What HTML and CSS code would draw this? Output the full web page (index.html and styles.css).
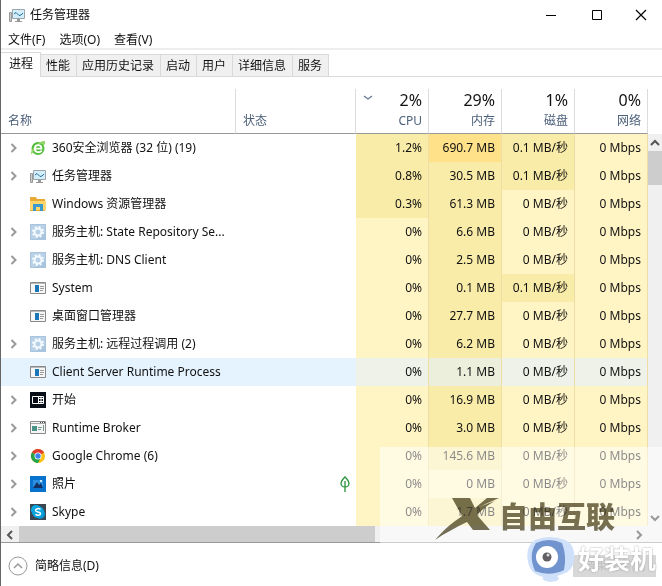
FILE: index.html
```html
<!DOCTYPE html>
<html lang="zh-CN">
<head>
  <meta charset="UTF-8">
  <title>任务管理器</title>
  <link rel="stylesheet" href="styles.css">
</head>
<body>

<svg class="symbols" aria-hidden="true">
  <symbol id="chevron" viewBox="0 0 8 10"><path d="M1.5 1 L5.5 5 L1.5 9" fill="none" stroke="currentColor" stroke-width="2"/></symbol>
  <symbol id="monitor" viewBox="0 0 16 16">
    <path d="M.5 5.5h2v9h-2z" fill="#ccc" stroke="#999"/>
    <path d="M3.500 2.500h12v9h-12z" fill="#d3edfa" stroke="#9aa5aa"/>
    <path d="M5 7l2-1.500 3 3 2-.5 2-2" fill="none" stroke="#21709b"/>
    <path d="M8 12h3v2h2v1H6v-1h2z" fill="#999"/>
  </symbol>
  <symbol id="browser" viewBox="0 0 16 16">
    <circle cx="8" cy="8.500" r="6.500" fill="#50bd38"/>
    <path d="M1.500 14.500C-1 11 8 1 14.500 1c1.500 1.500 0 4-1 5 0-3-2-3-4-2C6 6 5 10 1.500 14.500z" fill="#8ed564"/>
    <path d="M4.800 8.700h6.700c0-4.700-6.700-4.700-6.700 0 0 4 4.700 4.500 7 2" fill="none" stroke="#fff" stroke-width="1.800"/>
  </symbol>
  <symbol id="folder" viewBox="0 0 16 16">
    <path d="M0 1h6l1 2h8v12H0z" fill="#e8aa35"/>
    <path d="M0 5h16v9H0z" fill="#ffd66e"/>
    <path d="M3 8h10v7h-3v-4H6v4H3z" fill="#3a99ce"/>
  </symbol>
  <symbol id="service" viewBox="0 0 16 16">
    <path d="M0 0h16v16H0z" fill="#a9c4df"/>
    <path d="M1 1h14v7L5 15H1z" fill="#b9d1e7"/>
    <circle cx="8" cy="8" r="5" fill="none" stroke="#f4fbff" stroke-width="2" stroke-dasharray="2 1.930"/>
    <circle cx="8" cy="8" r="3.500" fill="none" stroke="#f4fbff" stroke-width="2"/>
  </symbol>
  <symbol id="app" viewBox="0 0 16 16">
    <path d="M.5 2.500h15v11H.5z" fill="#f7f7f7" stroke="#888"/>
    <path d="M1 3h14v1H1z" fill="#bbb"/>
    <path d="M5 5h4v7H5z" fill="#1977b8"/>
    <path d="M10 6.500h4M10 8.500h4M10 10.500h3" stroke="#999"/>
  </symbol>
  <symbol id="start" viewBox="0 0 16 16">
    <path d="M0 0h16v16H0z" fill="#080d18"/>
    <path d="M2.500 4.500h11v7h-11z" fill="none" stroke="#fff"/>
    <path d="M8.500 4v8M11 4v8M9 6.500h4M9 9.500h4" stroke="#fff"/>
  </symbol>
  <symbol id="broker" viewBox="0 0 16 16">
    <path d="M.5 1.500h15v12H.5z" fill="#f5f5f5" stroke="#888"/>
    <path d="M1 3.500h14" stroke="#aaa"/>
    <path d="M10 2.500h1M12 2.500h1M14 2.500h1" stroke="#444"/>
    <path d="M2 6h5v5H2z" fill="#4a9285"/>
    <path d="M8 7.500h4M8 9.500h3M13.500 5v6" stroke="#78988e"/>
  </symbol>
  <symbol id="chrome" viewBox="0 0 16 16">
    <circle cx="8" cy="8" r="7" fill="#fbc116"/>
    <path d="M8 8 L1.900 4.500 A7 7 0 0 1 14.100 4.500z" fill="#e33b2e"/>
    <path d="M8 8 L1.900 4.500 A7 7 0 0 0 8 15 L11 9.500z" fill="#25a34a"/>
    <circle cx="8" cy="8" r="3.500" fill="#fff"/>
    <circle cx="8" cy="8" r="2.700" fill="#3e82ee"/>
  </symbol>
  <symbol id="photos" viewBox="0 0 16 16">
    <path d="M0 0h16v16H0z" fill="#0873cf"/>
    <path d="M3 4h10v8H3z" fill="#2b8fe2"/>
    <path d="M3 12l4-6 2 3 2-2 2 5z" fill="#123063"/>
    <circle cx="11" cy="5" r="1" fill="#fff"/>
  </symbol>
  <symbol id="skype" viewBox="0 0 16 16">
    <path d="M0 0h16v16H0z" fill="#3b4650"/>
    <circle cx="6" cy="6" r="5" fill="#0aaeea"/>
    <circle cx="10" cy="10" r="5" fill="#078fd0"/>
    <circle cx="8" cy="8" r="6" fill="#08a2dd"/>
    <path d="M10.500 5.500C9 4 5.500 4.500 5.500 6.500c0 2 5 1 5 3 0 2-3.500 2.500-5 .8" fill="none" stroke="#fff" stroke-width="1.500"/>
  </symbol>
</svg>

<div class="window">
  <header class="titlebar">
    <svg class="icon"><use href="#monitor"/></svg>
    <h1>任务管理器</h1>
    <div class="window-buttons">
      <button type="button" aria-label="最小化"><svg viewBox="0 0 12 12"><path d="M1 6.500h10" stroke="#000"/></svg></button>
      <button type="button" aria-label="最大化"><svg viewBox="0 0 12 12"><path d="M1.500 1.500h9v9h-9z" fill="none" stroke="#000"/></svg></button>
      <button type="button" aria-label="关闭"><svg viewBox="0 0 12 12"><path d="M1 1l10 10M11 1L1 11" stroke="#000" stroke-width="1.200"/></svg></button>
    </div>
  </header>

  <nav class="menu">
    <button type="button">文件(F)</button>
    <button type="button">选项(O)</button>
    <button type="button">查看(V)</button>
  </nav>

  <div class="tabs">
    <button type="button" class="active">进程</button>
    <button type="button">性能</button>
    <button type="button">应用历史记录</button>
    <button type="button">启动</button>
    <button type="button">用户</button>
    <button type="button">详细信息</button>
    <button type="button">服务</button>
  </div>

  <main class="processes">
    <table>
      <colgroup>
        <col>
        <col class="col-status">
        <col class="col-value" span="4">
      </colgroup>
      <thead>
        <tr>
          <th class="text">名称</th>
          <th class="text">状态</th>
          <th>
            <svg class="sort" viewBox="0 0 10 6"><path d="M1 1l4 3 4-3" fill="none" stroke="#607797" stroke-width="1.200"/></svg>
            <strong>2%</strong>CPU
          </th>
          <th><strong>29%</strong>内存</th>
          <th><strong>1%</strong>磁盘</th>
          <th><strong>0%</strong>网络</th>
        </tr>
      </thead>
      <tbody>
        <tr>
          <td><div class="name"><button type="button" class="expand" aria-label="展开"><svg><use href="#chevron"/></svg></button><svg class="icon"><use href="#browser"/></svg><span>360安全浏览器 (32 位) (19)</span></div></td>
          <td></td><td class="mid">1.2%</td><td class="high">690.7 MB</td><td class="mid">0.1 MB/秒</td><td>0 Mbps</td>
        </tr>
        <tr>
          <td><div class="name"><button type="button" class="expand" aria-label="展开"><svg><use href="#chevron"/></svg></button><svg class="icon"><use href="#monitor"/></svg><span>任务管理器</span></div></td>
          <td></td><td class="mid">0.8%</td><td class="mid">30.5 MB</td><td class="mid">0.1 MB/秒</td><td>0 Mbps</td>
        </tr>
        <tr>
          <td><div class="name"><i class="expand"></i><svg class="icon"><use href="#folder"/></svg><span>Windows 资源管理器</span></div></td>
          <td></td><td class="mid">0.3%</td><td class="mid">61.3 MB</td><td>0 MB/秒</td><td>0 Mbps</td>
        </tr>
        <tr>
          <td><div class="name"><button type="button" class="expand" aria-label="展开"><svg><use href="#chevron"/></svg></button><svg class="icon"><use href="#service"/></svg><span>服务主机: State Repository Se...</span></div></td>
          <td></td><td>0%</td><td class="mid">6.6 MB</td><td>0 MB/秒</td><td>0 Mbps</td>
        </tr>
        <tr>
          <td><div class="name"><button type="button" class="expand" aria-label="展开"><svg><use href="#chevron"/></svg></button><svg class="icon"><use href="#service"/></svg><span>服务主机: DNS Client</span></div></td>
          <td></td><td>0%</td><td class="mid">2.5 MB</td><td>0 MB/秒</td><td>0 Mbps</td>
        </tr>
        <tr>
          <td><div class="name"><i class="expand"></i><svg class="icon"><use href="#app"/></svg><span>System</span></div></td>
          <td></td><td>0%</td><td class="mid">0.1 MB</td><td class="mid">0.1 MB/秒</td><td>0 Mbps</td>
        </tr>
        <tr>
          <td><div class="name"><i class="expand"></i><svg class="icon"><use href="#app"/></svg><span>桌面窗口管理器</span></div></td>
          <td></td><td>0%</td><td class="mid">27.7 MB</td><td>0 MB/秒</td><td>0 Mbps</td>
        </tr>
        <tr>
          <td><div class="name"><button type="button" class="expand" aria-label="展开"><svg><use href="#chevron"/></svg></button><svg class="icon"><use href="#service"/></svg><span>服务主机: 远程过程调用 (2)</span></div></td>
          <td></td><td>0%</td><td class="mid">6.2 MB</td><td>0 MB/秒</td><td>0 Mbps</td>
        </tr>
        <tr class="hovered">
          <td><div class="name"><i class="expand"></i><svg class="icon"><use href="#app"/></svg><span>Client Server Runtime Process</span></div></td>
          <td></td><td>0%</td><td class="mid">1.1 MB</td><td>0 MB/秒</td><td>0 Mbps</td>
        </tr>
        <tr>
          <td><div class="name"><button type="button" class="expand" aria-label="展开"><svg><use href="#chevron"/></svg></button><svg class="icon"><use href="#start"/></svg><span>开始</span></div></td>
          <td></td><td>0%</td><td class="mid">16.9 MB</td><td>0 MB/秒</td><td>0 Mbps</td>
        </tr>
        <tr>
          <td><div class="name"><button type="button" class="expand" aria-label="展开"><svg><use href="#chevron"/></svg></button><svg class="icon"><use href="#broker"/></svg><span>Runtime Broker</span></div></td>
          <td></td><td>0%</td><td class="mid">3.0 MB</td><td>0 MB/秒</td><td>0 Mbps</td>
        </tr>
        <tr>
          <td><div class="name"><button type="button" class="expand" aria-label="展开"><svg><use href="#chevron"/></svg></button><svg class="icon"><use href="#chrome"/></svg><span>Google Chrome (6)</span></div></td>
          <td></td><td>0%</td><td class="mid">145.6 MB</td><td>0 MB/秒</td><td>0 Mbps</td>
        </tr>
        <tr>
          <td><div class="name"><button type="button" class="expand" aria-label="展开"><svg><use href="#chevron"/></svg></button><svg class="icon"><use href="#photos"/></svg><span>照片</span></div></td>
          <td><svg class="leaf" viewBox="0 0 10 16"><path d="M5 1C2 4 1 5 1 7.500c0 2 2 3.500 4 3.500s4-1.500 4-3.500C9 5 8 4 5 1zM5 5v11" fill="none" stroke="#279238" stroke-width="1.300"/></svg></td>
          <td>0%</td><td>0 MB</td><td>0 MB/秒</td><td>0 Mbps</td>
        </tr>
        <tr>
          <td><div class="name"><button type="button" class="expand" aria-label="展开"><svg><use href="#chevron"/></svg></button><svg class="icon"><use href="#skype"/></svg><span>Skype</span></div></td>
          <td></td><td>0%</td><td class="mid">1.7 MB</td><td>0 MB/秒</td><td>0 Mbps</td>
        </tr>
      </tbody>
    </table>

    <div class="scroll-v">
      <button type="button" aria-label="向上滚动"><svg viewBox="0 0 10 10"><path d="M1 7l4-4 4 4" fill="none" stroke="#555" stroke-width="2"/></svg></button>
      <div class="thumb"></div>
      <button type="button" class="end" aria-label="向下滚动"><svg viewBox="0 0 10 10"><path d="M1 3l4 4 4-4" fill="none" stroke="#333" stroke-width="2"/></svg></button>
    </div>
    <div class="scroll-h">
      <button type="button" aria-label="向左滚动"><svg viewBox="0 0 10 10"><path d="M7 1L3 5l4 4" fill="none" stroke="#555" stroke-width="2"/></svg></button>
      <div class="thumb"></div>
      <button type="button" class="end" aria-label="向右滚动"><svg viewBox="0 0 10 10"><path d="M3 1l4 4-4 4" fill="none" stroke="#333" stroke-width="2"/></svg></button>
    </div>
  </main>

  <footer>
    <button type="button" class="less">
      <svg viewBox="0 0 20 20"><circle cx="10" cy="10" r="9" fill="none" stroke="#999"/><path d="M6 12l4-4 4 4" fill="none" stroke="#999" stroke-width="1.500"/></svg>
      简略信息(D)
    </button>
    <button type="button" class="end-task" disabled>结束任务(E)</button>
  </footer>

  <div class="veil"></div>
  <div class="mark mark-top">
    <svg viewBox="0 0 64 44">
      <path d="M17 1H35L40 11L52 1H64C45 9 31 17 20 28L27 19z" fill="#777158"/>
      <path d="M60 4C51 9 46 14 42 18L55 33H38L32 25C20 31 10 36 0 43C17 23 36 12 60 4z" fill="#777158"/>
    </svg>
    <span>自由互联</span>
  </div>
  <div class="mark mark-bottom">
    <svg viewBox="0 0 50 46">
      <path d="M9 4Q24-2 39 4Q50 9 48 24Q47 35 37 38L31 40Q37 45 24 46Q15 45 17 41Q4 38 2 26Q-1 11 9 4z" fill="#cfe0fa"/>
      <path d="M10 7Q23 1 36 7Q41 20 38 34Q24 41 9 35Q2 19 10 7z" fill="#7294ce"/>
      <circle cx="21" cy="21" r="11" fill="#fff"/>
      <circle cx="21" cy="21" r="4.500" fill="#625e64"/>
      <circle cx="22" cy="19" r="1.500" fill="#ddd"/>
    </svg>
    <span>好装机</span>
  </div>
</div>

</body>
</html>
```
FILE: styles.css
```css
* {
  box-sizing: border-box;
}

body {
  margin: 0;
  background: #fff;
  color: #111;
  font: 12px/16px "Noto Sans", "Noto Sans CJK SC", sans-serif;
}

button {
  padding: 0;
  border: none;
  background: none;
  color: inherit;
  font: inherit;
}

svg {
  display: block;
}

.symbols {
  position: absolute;
  width: 0;
  height: 0;
}

.window {
  position: relative;
  display: flex;
  flex-direction: column;
  min-height: 100vh;
  border-left: 1px solid #666;
  overflow: hidden;
}

.icon {
  flex: none;
  width: 16px;
  height: 16px;
}

/* title and menu */
.titlebar {
  display: flex;
  align-items: center;
  gap: 5px;
  height: 30px;
  padding-left: 8px;
}

h1 {
  margin: 0;
  font-size: 12px;
  font-weight: normal;
}

.window-buttons {
  display: flex;
  margin-left: auto;
}

.window-buttons button {
  display: flex;
  align-items: center;
  justify-content: center;
  width: 46px;
  height: 28px;
}

.window-buttons button:last-child {
  width: 42px;
}

.window-buttons svg {
  width: 12px;
  height: 12px;
}

.menu {
  display: flex;
  align-items: flex-end;
  gap: 14px;
  height: 20px;
  padding-left: 7px;
  border-bottom: 2px solid #eee;
}

/* tabs */
.tabs {
  display: flex;
  align-items: flex-end;
  height: 27px;
  border-bottom: 1px solid #d9d9d9;
}

.tabs button {
  height: 22px;
  padding: 0 6px 0 5px;
  border-top: 1px solid #d9d9d9;
  border-right: 1px solid #d9d9d9;
  background: #f0f0f0;
}

.tabs .active {
  height: 25px;
  margin-bottom: -1px;
  padding: 0 7px 2px 8px;
  background: #fff;
}

/* process list */
.processes {
  display: grid;
  grid-template-columns: 1fr 14px;
  padding-top: 12px;
}

table {
  width: 100%;
  table-layout: fixed;
  border-spacing: 0;
}

.col-status {
  width: 120px;
}

.col-value {
  width: 73px;
}

th {
  position: relative;
  height: 45px;
  padding: 0 6px 4px;
  border-right: 1px solid #d9dde0;
  border-bottom: 1px solid #999;
  color: #4c607a;
  font-weight: normal;
  text-align: right;
  vertical-align: bottom;
}

th.text {
  padding-left: 7px;
  text-align: left;
}

th strong {
  display: block;
  padding-bottom: 3px;
  color: #111;
  font-size: 16px;
  line-height: 20px;
  font-weight: normal;
}

.sort {
  position: absolute;
  top: 6px;
  left: 7px;
  width: 10px;
  height: 6px;
}

td {
  height: 28px;
  padding: 0 6px 0 0;
  border-right: 1px solid #eedda4;
  background: #fff4c4;
  text-align: right;
  white-space: nowrap;
}

td:nth-child(-n+2) {
  border-right: none;
  background: #fff;
}

td.mid {
  background: #f9eca8;
}

td.high {
  background: #ffe18a;
}

.hovered td {
  background: #eef2e8;
}

.hovered td.mid {
  background: #ecefdc;
}

.hovered td:nth-child(-n+2) {
  background: #e5f3ff;
}

.name {
  display: flex;
  align-items: center;
  padding-left: 9px;
}

.name span {
  padding-left: 6px;
}

.expand {
  width: 20px;
  color: #999;
}

.expand svg {
  width: 8px;
  height: 10px;
}

.leaf {
  width: 10px;
  height: 16px;
  margin-left: auto;
}

/* scrollbars */
.scroll-v,
.scroll-h {
  display: flex;
  background: #f0f0f0;
}

.scroll-v {
  flex-direction: column;
  margin-top: 45px;
}

.scroll-h {
  grid-column: 1 / -1;
  height: 16px;
  padding-right: 14px;
}

.scroll-v button,
.scroll-h button {
  display: flex;
  align-items: center;
  justify-content: center;
  height: 17px;
}

.scroll-h button {
  width: 18px;
}

.scroll-v svg,
.scroll-h svg {
  width: 10px;
  height: 10px;
}

.thumb {
  background: #cdcdcd;
}

.scroll-v .thumb {
  height: 34px;
}

.scroll-h .thumb {
  width: 55%;
}

.scroll-v .end {
  margin-top: auto;
}

.scroll-h .end {
  margin-left: auto;
}

/* footer */
footer {
  display: flex;
  flex: 1;
  align-items: center;
  justify-content: space-between;
  padding: 3px 6px 0 7px;
  border-top: 1px solid #999;
}

.less {
  display: flex;
  align-items: center;
  gap: 7px;
}

.less svg {
  width: 20px;
  height: 20px;
}

.end-task {
  width: 83px;
  height: 22px;
  background: #b0b0b0;
  color: #888;
}

/* watermark */
.veil {
  position: absolute;
  right: 0;
  bottom: 0;
  width: 282px;
  height: 139px;
  background: rgba(255, 255, 255, 0.5);
  pointer-events: none;
}

.mark {
  position: absolute;
  display: flex;
  align-items: center;
  white-space: nowrap;
  pointer-events: none;
}

.mark-top {
  right: 47px;
  bottom: 45px;
  color: #777158;
  font-size: 29px;
  line-height: 36px;
  font-weight: 900;
  mix-blend-mode: multiply;
}

.mark-top svg {
  width: 64px;
  height: 44px;
}

.mark-top span {
  padding-bottom: 4px;
}

.mark-bottom {
  right: 6px;
  bottom: 4px;
  gap: 2px;
  color: #fff;
  font-size: 26px;
  line-height: 32px;
  font-weight: bold;
  text-shadow: 0 0 2px #999;
}

.mark-bottom svg {
  width: 50px;
  height: 46px;
}
```
